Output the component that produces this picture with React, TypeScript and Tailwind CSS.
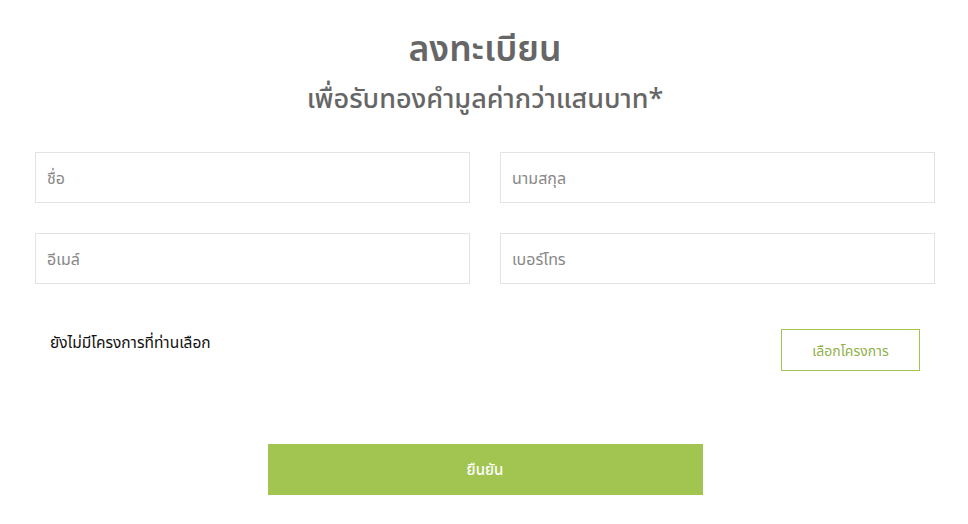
import React from "react";

export default function App() {
  const font = { fontFamily: '"Noto Sans", "Noto Sans Thai", Tahoma, "DejaVu Sans", sans-serif' };
  return (
    <div className="w-[968px] h-[524px] bg-white overflow-hidden" style={font}>
      <div className="w-[900px] ml-[35px] flex flex-col">
        <h1 className="text-center text-[35.5px] leading-[40px] font-semibold text-[#666666] mt-[27px]">ลงทะเบียน</h1>
        <h2 className="text-center text-[27px] leading-[32px] font-medium text-[#666666] mt-[15px]">เพื่อรับทองคำมูลค่ากว่าแสนบาท*</h2>
        <div className="grid grid-cols-2 gap-x-[30px] gap-y-[30px] mt-[38px]">
          {["ชื่อ", "นามสกุล", "อีเมล์", "เบอร์โทร"].map((p) => (
            <div key={p} className="h-[51px] border border-[#e3e3e3] flex items-center px-[11px] text-[16px] text-[#888888]">
              {p}
            </div>
          ))}
        </div>
        <div className="flex items-start justify-between mt-[45px] pl-[15px] pr-[15px]">
          <div className="text-[15.5px] text-[#111111] mt-[2px]">ยังไม่มีโครงการที่ท่านเลือก</div>
          <div className="w-[139px] h-[42px] border border-[#a2c552] flex items-center justify-center text-[14px] text-[#8fb04a]">
            เลือกโครงการ
          </div>
        </div>
        <div className="flex justify-center mt-[73px]">
          <div className="w-[435px] h-[51px] bg-[#a2c552] flex items-center justify-center text-[15px] font-medium text-white">
            ยืนยัน
          </div>
        </div>
      </div>
    </div>
  );
}
